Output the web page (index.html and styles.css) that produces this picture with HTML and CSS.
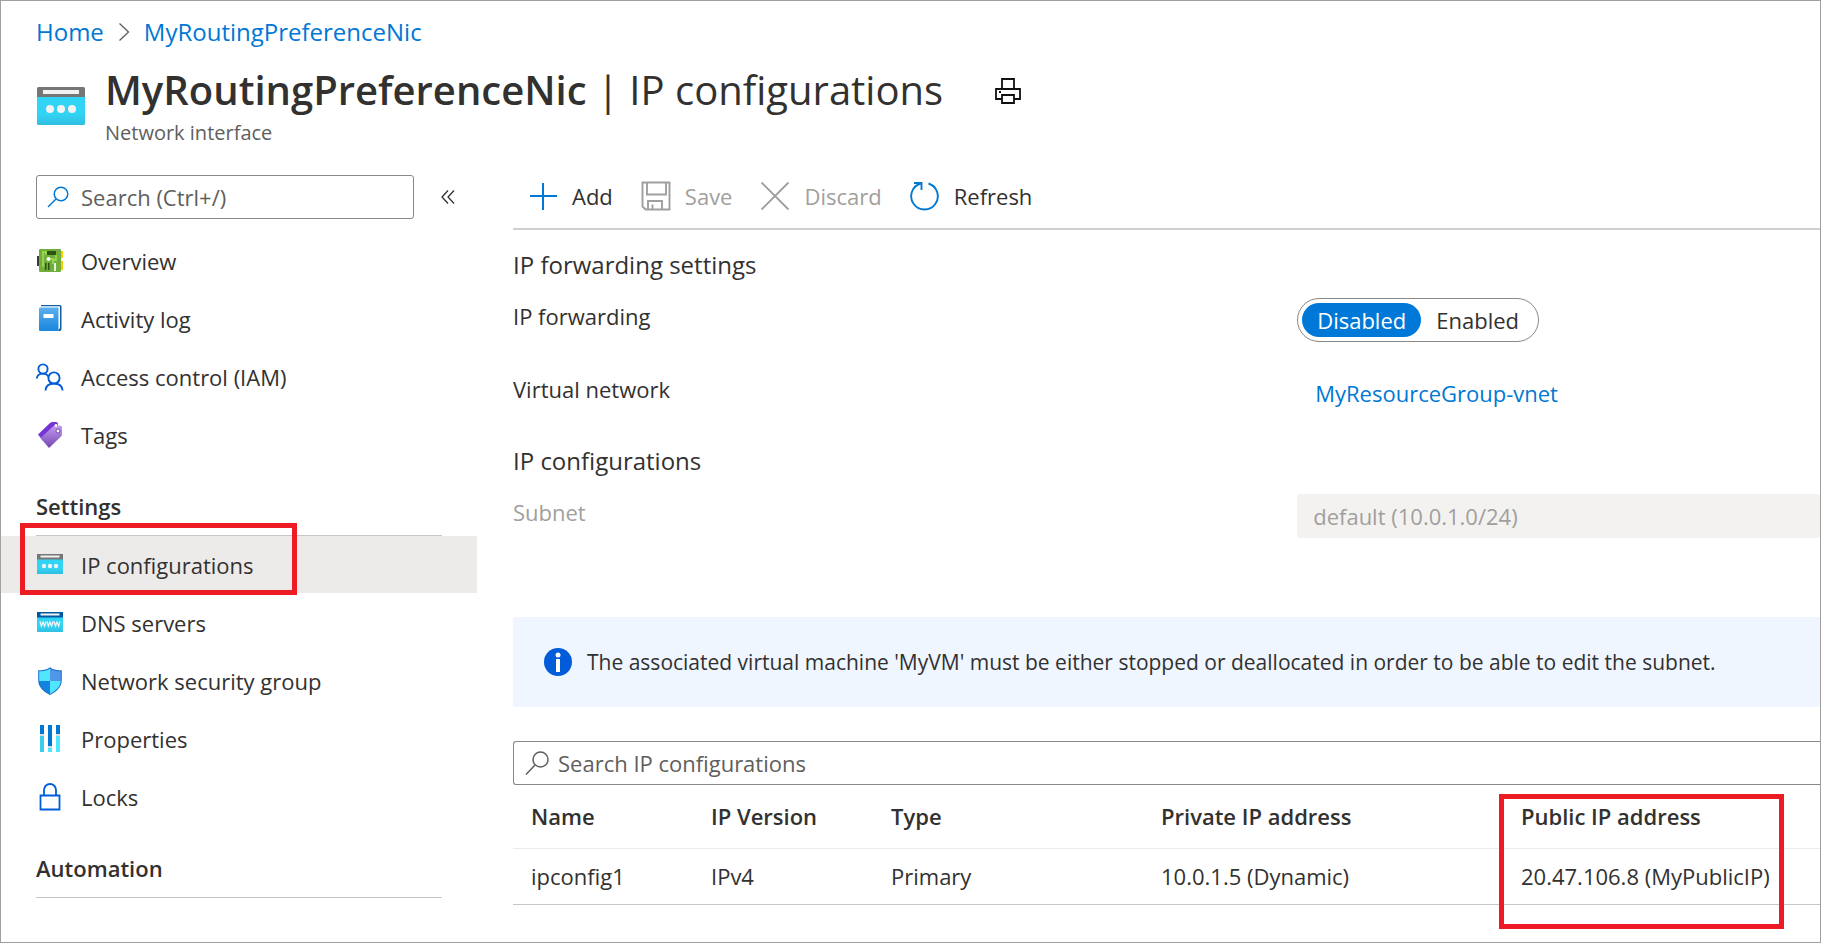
FILE: index.html
```html
<!DOCTYPE html>
<html lang="en">
<head>
<meta charset="utf-8">
<title>MyRoutingPreferenceNic | IP configurations</title>
<link rel="stylesheet" href="styles.css">
</head>
<body>
<div class="blade">
  <header class="blade-header">
    <nav class="breadcrumb" aria-label="Breadcrumb">
      <a href="#">Home</a>
      <svg class="crumb-chevron" viewBox="0 0 12 20" aria-hidden="true"><path d="M1.500 1.500l9 8.500-9 8.500"/></svg>
      <a href="#">MyRoutingPreferenceNic</a>
    </nav>
    <div class="heading">
      <svg class="heading-icon" viewBox="0 0 48 38" aria-hidden="true">
        <defs><linearGradient id="cyan" x1="0" y1="0" x2="0" y2="1"><stop offset="0" stop-color="#32d4f5"/><stop offset=".6" stop-color="#32d4f5"/><stop offset="1" stop-color="#30bee0"/></linearGradient></defs>
        <path fill="url(#cyan)" d="M0 10h48v26.500a1.500 1.500 0 0 1-1.500 1.500h-45A1.500 1.500 0 0 1 0 36.500z"/>
        <path fill="#767676" d="M1.500 0h45A1.500 1.500 0 0 1 48 1.500V10H0V1.500A1.500 1.500 0 0 1 1.500 0z"/>
        <path fill="#f2f2f2" d="M6 3h36v4H6z"/>
        <circle cx="13" cy="22" r="4" fill="#f2f2f2"/><circle cx="24" cy="22" r="4" fill="#f2f2f2"/><circle cx="35" cy="22" r="4" fill="#f2f2f2"/>
      </svg>
      <div class="heading-text">
        <h1><strong>MyRoutingPreferenceNic</strong> | IP configurations</h1>
        <p>Network interface</p>
      </div>
      <button class="print" type="button" aria-label="Print">
        <svg viewBox="0 0 26 26" aria-hidden="true"><path d="M7 11V1h12v10M7 21H1V11h24v10h-6M7 17h12v8H7z"/><path d="M4 14h2"/></svg>
      </button>
    </div>
  </header>

  <div class="body">
    <aside class="sidebar">
      <div class="menu-search-row">
        <div class="field-search menu-search">
          <svg viewBox="0 0 22 22" aria-hidden="true"><circle cx="14" cy="8" r="6.800"/><path d="M9 13L1 21"/></svg>
          <input type="text" placeholder="Search (Ctrl+/)" aria-label="Search menu">
        </div>
        <button class="collapse" type="button" aria-label="Collapse menu">
          <svg viewBox="0 0 14 14" aria-hidden="true"><path d="M7 .500L1 7l6 6.500M13 .500L7 7l6 6.500"/></svg>
        </button>
      </div>

      <nav aria-label="Resource menu">
        <ul class="menu">
          <li><a href="#">
            <svg viewBox="0 0 28 28" aria-hidden="true"><path fill="#3a3a3a" d="M1 9h3v10H1z"/><path fill="#ffca00" d="M24 4h3v7h-3zM24 14h3v9h-3z"/><rect x="3" y="2" width="22" height="23" rx="1" fill="#6fae3c"/><path fill="none" stroke="#a4e04e" stroke-width="1.500" d="M7 5v15M10 8V5H6M13 12h4v5M20 8v5h-3"/><path fill="#2f5212" d="M11 4h9v4h-9zM9 16h1.500v7H9zM12 16h1.500v7H12z"/><circle cx="12.500" cy="12" r="2" fill="#fff"/><path fill="#e6f3d8" d="M18 16h2v8h-2z"/></svg>
            <span>Overview</span></a></li>
          <li><a href="#">
            <svg viewBox="0 0 28 28" aria-hidden="true"><defs><linearGradient id="book" x1="0" y1="0" x2="0" y2="1"><stop offset="0" stop-color="#5ab0ef"/><stop offset="1" stop-color="#1a86dc"/></linearGradient></defs><path fill="#135f9e" d="M5 0h19a1.500 1.500 0 0 1 1.500 1.500V24a2 2 0 0 1-2 2H5z"/><path fill="#fff" d="M5 1.300h19V23l-1.500 2H5z"/><path fill="url(#book)" d="M3 4a1.500 1.500 0 0 1 1.500-1.500H22.500V26H4a1 1 0 0 1-1-1z"/><path fill="#fff" d="M7.500 9h10v4h-10z"/></svg>
            <span>Activity log</span></a></li>
          <li><a href="#">
            <svg viewBox="0 0 28 28" aria-hidden="true" fill="none" stroke="#015cda" stroke-width="1.900"><circle cx="7" cy="6" r="4.600"/><circle cx="18" cy="15" r="5.600"/><path d="M.800 15.500C1.200 11.500 4 10.600 7 10.600s4.500 1 5.500 3.200M9.500 27.500c.300-4.500 3.700-7 8.500-7s8.200 2.500 8.600 7"/></svg>
            <span>Access control (IAM)</span></a></li>
          <li><a href="#">
            <svg viewBox="0 0 28 28" aria-hidden="true"><defs><linearGradient id="tag" x1="0" y1="0" x2="0" y2="1"><stop offset="0" stop-color="#c69aeb"/><stop offset="1" stop-color="#7147b2"/></linearGradient></defs><path fill="#7634d7" d="M2 13.500L14 2q1-1 2.500-1H20q2 0 2 2v5L7 20z"/><path fill="url(#tag)" d="M4.500 17L17 5.500q1-1 2.500-1H24q2 0 2 2V13q0 1.500-1 2.500L13 27z"/><circle cx="20" cy="4.500" r="1.400" fill="#fff"/><circle cx="22" cy="10" r="2" fill="#fff" stroke="#7147b2"/></svg>
            <span>Tags</span></a></li>
        </ul>
        <h2 class="menu-heading">Settings</h2>
        <ul class="menu">
          <li class="selected"><a href="#" aria-current="page">
            <svg viewBox="0 0 28 28" aria-hidden="true"><path fill="url(#cyan)" d="M1 8h26v15H1z"/><path fill="#767676" d="M1 3h26v5.500H1z"/><path fill="#f2f2f2" d="M4.500 4.500h19v2h-19z"/><circle cx="8" cy="15" r="2.200" fill="#f2f2f2"/><circle cx="14" cy="15" r="2.200" fill="#f2f2f2"/><circle cx="20" cy="15" r="2.200" fill="#f2f2f2"/></svg>
            <span>IP configurations</span></a>
            <div class="callout callout-menu"></div></li>
          <li><a href="#">
            <svg viewBox="0 0 28 28" aria-hidden="true"><path fill="url(#cyan)" d="M1 8h26v15H1z"/><path fill="#005ba1" d="M1 3h26v5.500H1z"/><path fill="#f2f2f2" d="M4.500 4.500h19v2h-19z"/><path fill="none" stroke="#f2f2f2" stroke-width="1.300" d="M4 12.500l1.400 4.500L7 13l1.600 4 1.400-4.500M11 12.500l1.400 4.500 1.600-4 1.600 4 1.400-4.500M18 12.500l1.400 4.500 1.600-4 1.600 4 1.400-4.500"/></svg>
            <span>DNS servers</span></a></li>
          <li><a href="#">
            <svg viewBox="0 0 28 28" aria-hidden="true"><defs><clipPath id="shield"><path d="M14 1.500C17 4 21 4.200 24.800 4.300V13c0 7-5.500 11-10.800 14C8.700 24 3.200 20 3.200 13V4.300C7 4.200 11 4 14 1.500z"/></clipPath></defs><path fill="#1a6fcf" d="M14 .200C17.500 3 21.500 3.300 25.800 3.300V13c0 7.600-6 12-11.800 15C8.200 25 2.200 20.600 2.200 13V3.300C6.500 3.300 10.500 3 14 .200z"/><g clip-path="url(#shield)"><path fill="#50e6ff" d="M0 0h14v14H0zM14 14h14v14H14z"/><path fill="#5097ea" d="M14 0h14v14H14z"/><path fill="#1482e0" d="M0 14h14v14H0z"/></g></svg>
            <span>Network security group</span></a></li>
          <li><a href="#">
            <svg viewBox="0 0 28 28" aria-hidden="true"><path fill="#0078d4" d="M4 0h4v9H4zM12 0h4v21h-4zM20 0h4v9h-4z"/><path fill="#3fcdec" d="M4 11h4v16H4z"/><path fill="#50e6ff" d="M12 23h4v4h-4zM20 11h4v16h-4z"/><path fill="#d5dde2" d="M4 9h4v2H4zM12 21h4v2h-4zM20 9h4v2h-4z"/></svg>
            <span>Properties</span></a></li>
          <li><a href="#">
            <svg viewBox="0 0 28 28" aria-hidden="true" fill="none" stroke="#015cda" stroke-width="1.800"><path d="M4.500 12.500h19v14h-19z"/><path d="M8 12.500V7a6 6 0 0 1 12 0v5.500"/></svg>
            <span>Locks</span></a></li>
        </ul>
        <h2 class="menu-heading">Automation</h2>
      </nav>
    </aside>

    <main class="content">
      <div class="toolbar" role="toolbar" aria-label="Commands">
        <button type="button"><svg class="blue" viewBox="0 0 30 30" aria-hidden="true"><path stroke-width="2" d="M15 2v27M2 15h27"/></svg>Add</button>
        <button type="button" disabled><svg viewBox="0 0 30 30" aria-hidden="true"><path stroke-width="1.900" d="M1.500 1.500h27v27h-24l-3-3zM6 1.500v12h19v-12M7 28.500V20h14v8.500M11.500 28.500v-5"/></svg>Save</button>
        <button type="button" disabled><svg viewBox="0 0 30 30" aria-hidden="true"><path stroke-width="1.800" d="M1.500 1.500l27 27M28.500 1.500l-27 27"/></svg>Discard</button>
        <button type="button"><svg class="blue" viewBox="0 0 30 30" aria-hidden="true"><path stroke-width="1.900" d="M18.500 2.500A13.300 13.300 0 1 1 10.500 2.500M4 2h7.500v7"/></svg>Refresh</button>
      </div>

      <h2 class="section-title">IP forwarding settings</h2>
      <div class="form-row row-toggle">
        <span id="fwd-label">IP forwarding</span>
        <div class="toggle" role="radiogroup" aria-labelledby="fwd-label">
          <input type="radio" name="forwarding" id="fwd-off" checked><label for="fwd-off">Disabled</label>
          <input type="radio" name="forwarding" id="fwd-on"><label for="fwd-on">Enabled</label>
        </div>
      </div>
      <div class="form-row row-network">
        <span>Virtual network</span>
        <a href="#">MyResourceGroup-vnet</a>
      </div>
      <h2 class="section-title">IP configurations</h2>
      <div class="form-row row-subnet">
        <label for="subnet">Subnet</label>
        <select id="subnet" disabled><option>default (10.0.1.0/24)</option></select>
      </div>

      <div class="banner" role="status">
        <svg viewBox="0 0 28 28" aria-hidden="true"><circle cx="14" cy="14" r="14" fill="#015cda"/><circle cx="14" cy="7" r="2.500" fill="#fff"/><path fill="#fff" d="M12 11h4v13h-4z"/></svg>
        <span>The associated virtual machine 'MyVM' must be either stopped or deallocated in order to be able to edit the subnet.</span>
      </div>

      <div class="field-search table-search">
        <svg viewBox="0 0 24 24" aria-hidden="true"><circle cx="15.500" cy="8.500" r="7.500"/><path d="M10 14L1 23.500"/></svg>
        <input type="text" placeholder="Search IP configurations" aria-label="Search IP configurations">
      </div>
      <div class="table-wrap">
        <table>
          <colgroup><col class="c-name"><col class="c-version"><col class="c-type"><col class="c-private"><col></colgroup>
          <thead><tr><th>Name</th><th>IP Version</th><th>Type</th><th>Private IP address</th><th>Public IP address</th></tr></thead>
          <tbody><tr><td>ipconfig1</td><td>IPv4</td><td>Primary</td><td>10.0.1.5 (Dynamic)</td><td>20.47.106.8 (MyPublicIP)</td></tr></tbody>
        </table>
        <div class="callout callout-table"></div>
      </div>
    </main>
  </div>
</div>
</body>
</html>
```

FILE: styles.css
```css
* { box-sizing: border-box; }
body {
  margin: 0;
  background: #fff;
  color: #323130;
  font-family: "Open Sans", "Noto Sans", sans-serif;
  font-size: 22px;
  line-height: 30px;
}
h1, h2, p, ul { margin: 0; padding: 0; font-weight: 400; }
ul { list-style: none; }
a { color: #0078d4; text-decoration: none; }
button, input, select { font: inherit; color: inherit; }
button { padding: 0; border: 0; background: none; }
svg { display: block; flex: none; }

.blade {
  min-height: 100vh;
  border: 1px solid #a0a0a0;
  overflow: hidden;
}

/* Header */
.blade-header { padding: 14px 35px 0; }
.breadcrumb {
  display: flex;
  align-items: center;
  gap: 14px;
  font-size: 24px;
  line-height: 34px;
}
.crumb-chevron { width: 12px; height: 20px; fill: none; stroke: #605e5c; stroke-width: 1.3; }
.heading { display: flex; align-items: flex-start; padding-top: 12px; }
.heading-icon { width: 48px; height: 38px; margin: 26px 20px 0 1px; }
.heading h1 { font-size: 40px; line-height: 58px; white-space: nowrap; }
.heading strong { font-weight: 600; }
.heading p { color: #605e5c; font-size: 20px; line-height: 28px; }
.print { margin: 17px 0 0 52px; }
.print svg { width: 26px; height: 26px; fill: none; stroke: #111; stroke-width: 1.8; }

.body { display: flex; align-items: flex-start; padding-top: 28px; }

/* Resource menu */
.sidebar { width: 476px; flex: none; }
.menu-search-row { display: flex; align-items: center; padding: 0 0 13px 35px; gap: 27px; }
.field-search {
  display: flex;
  align-items: center;
  height: 44px;
  border: 1px solid #8a8886;
  border-radius: 3px;
}
.field-search svg { fill: none; stroke-width: 1.5; }
.field-search input { flex: 1; min-width: 0; border: 0; padding: 0; outline: 0; background: none; }
.field-search input::placeholder { color: #605e5c; opacity: 1; }
.menu-search { width: 378px; padding-left: 10px; gap: 12px; }
.menu-search svg { width: 22px; height: 22px; stroke: #0078d4; }
.collapse svg { width: 14px; height: 14px; fill: none; stroke: #323130; stroke-width: 1.3; }
.menu { display: flex; flex-direction: column; gap: 1px; }
.menu li { position: relative; }
.menu a {
  display: flex;
  align-items: center;
  gap: 17px;
  height: 57px;
  padding-left: 35px;
  color: inherit;
}
.menu svg { width: 28px; height: 28px; }
.selected a { background: #edebe9; }
.menu-heading {
  margin: 0 35px;
  padding: 28px 0 14px;
  border-bottom: 1px solid #c8c6c4;
  font-size: 22px;
  font-weight: 600;
}
.callout { position: absolute; border: 5px solid #ed1c24; pointer-events: none; }
.callout-menu { left: 19px; top: -13px; width: 277px; height: 72px; }

/* Main pane */
.content { flex: 1; min-width: 0; margin-left: 36px; }
.toolbar {
  display: flex;
  gap: 28px;
  height: 55px;
  padding: 4px 0 0 15px;
  border-bottom: 2px solid #d2d0ce;
}
.toolbar button { display: flex; align-items: center; gap: 14px; height: 34px; }
.toolbar svg { width: 30px; height: 30px; fill: none; stroke: currentColor; }
.toolbar .blue { color: #0078d4; }
.toolbar button:disabled { color: #a19f9d; }
.section-title { font-size: 24px; line-height: 34px; }
.toolbar + .section-title { margin-top: 18px; }
.form-row { display: grid; grid-template-columns: 3fr 2fr; align-items: start; }
.row-toggle { margin-top: 16px; }
.row-network { margin-top: 32px; }
.row-network a { padding: 4px 0 0 18px; }
.row-network + .section-title { margin-top: 36px; }
.row-subnet { margin-top: 16px; color: #a19f9d; }
.row-toggle > span, .row-subnet > label { padding-top: 3px; }
.toggle {
  justify-self: start;
  display: flex;
  height: 44px;
  padding: 4px;
  border: 1px solid #8a8886;
  border-radius: 22px;
}
.toggle input { position: absolute; opacity: 0; pointer-events: none; }
.toggle label { padding: 0 15px; line-height: 34px; border-radius: 17px; }
.toggle input:checked + label { background: #0078d7; color: #fff; }
.row-subnet select {
  appearance: none;
  height: 44px;
  padding: 0 16px;
  border: 0;
  border-radius: 3px;
  background: #f3f2f1;
  color: #a19f9d;
  opacity: 1;
}
.banner {
  display: flex;
  align-items: center;
  gap: 15px;
  min-height: 90px;
  margin-top: 79px;
  padding: 0 31px;
  border-radius: 3px 0 0 3px;
  background: #eff6ff;
  font-size: 21px;
}
.banner svg { width: 28px; height: 28px; }
.table-search {
  margin-top: 34px;
  padding-left: 11px;
  gap: 9px;
  border-right: 0;
  border-radius: 3px 0 0 3px;
}
.table-search svg { width: 24px; height: 24px; stroke: #605e5c; }
.table-wrap { position: relative; }
table { width: 100%; border-collapse: collapse; table-layout: fixed; }
.c-name, .c-version { width: 180px; }
.c-type { width: 270px; }
.c-private { width: 360px; }
th, td { padding: 0 0 0 18px; text-align: left; white-space: nowrap; }
th { height: 63px; font-weight: 600; border-bottom: 1px solid #edebe9; }
td { height: 56px; border-bottom: 1px solid #c8c6c4; }
.callout-table { left: 986px; top: 9px; width: 285px; height: 135px; }
```
